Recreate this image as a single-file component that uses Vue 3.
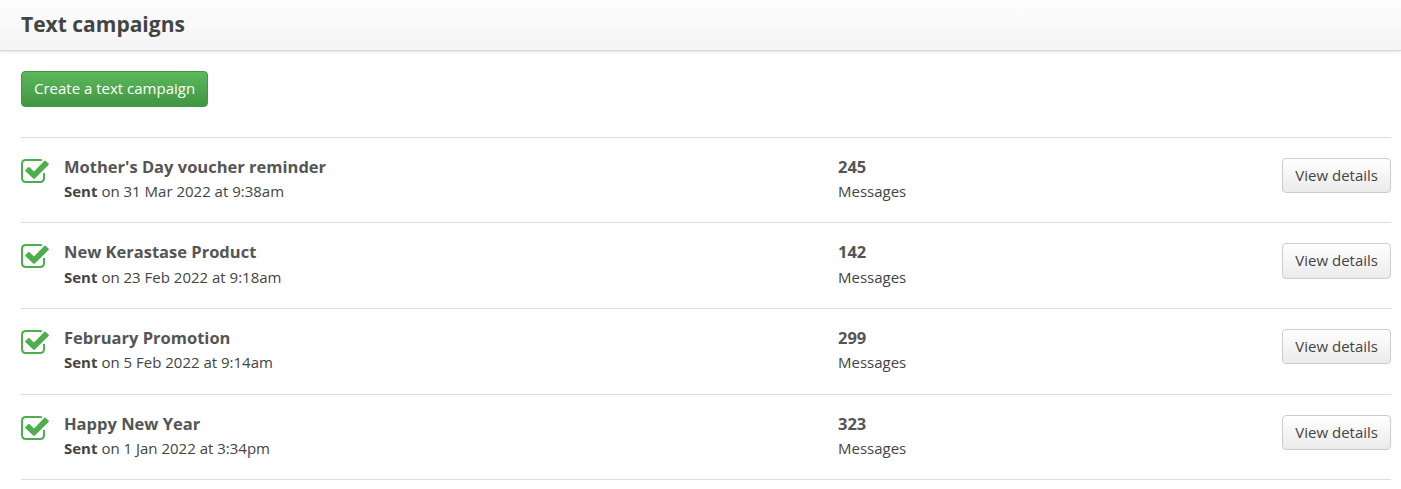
<template>
  <div class="page">
    <header class="page-header">
      <h1>Text campaigns</h1>
    </header>

    <main class="content">
      <button class="btn btn-success">Create a text campaign</button>

      <ul class="campaigns">
        <li v-for="campaign in campaigns" :key="campaign.name" class="campaign">
          <svg class="icon" viewBox="0 0 28 26" width="28" height="26">
            <path
              class="box"
              d="M21 2.4Q20.3 2 19 2H5Q1 2 1 6V20Q1 24 5 24H19Q23 24 23 20V15"
            />
            <path
              class="tick"
              d="M4.5 11.9L7.1 9.3Q7.9 8.6 8.6 9.3L13 13.5L23.2 3Q24 2.2 24.8 3L27.5 5.5Q28.3 6.3 27.5 7.1L13.8 20.5Q13 21.2 12.2 20.5L4.5 13.3Q3.8 12.6 4.5 11.9Z"
            />
          </svg>
          <div class="info">
            <h2>{{ campaign.name }}</h2>
            <p><strong>Sent</strong> on {{ campaign.sentAt }}</p>
          </div>
          <div class="count">
            <h2>{{ campaign.messages }}</h2>
            <p>Messages</p>
          </div>
          <button class="btn btn-default">View details</button>
        </li>
      </ul>
    </main>
  </div>
</template>

<script setup>
const campaigns = [
  { name: "Mother's Day voucher reminder", sentAt: '31 Mar 2022 at 9:38am', messages: 245 },
  { name: 'New Kerastase Product', sentAt: '23 Feb 2022 at 9:18am', messages: 142 },
  { name: 'February Promotion', sentAt: '5 Feb 2022 at 9:14am', messages: 299 },
  { name: 'Happy New Year', sentAt: '1 Jan 2022 at 3:34pm', messages: 323 }
]
</script>

<style>
body {
  margin: 0;
  background: #fff;
}
</style>

<style scoped>
.page {
  height: 489px;
  overflow: hidden;
  font-family: 'Open Sans', sans-serif;
  font-size: 15px;
  color: #444;
}

.page-header {
  box-sizing: border-box;
  height: 51px;
  padding: 0 21px;
  background: linear-gradient(to bottom, #fdfdfd, #f4f4f4);
  border-bottom: 1px solid #d9d9d9;
  box-shadow: 0 1px 3px rgba(0, 0, 0, 0.12);
}

h1 {
  margin: 0;
  font-size: 21px;
  font-weight: 700;
  line-height: 48px;
}

.content {
  padding: 20px 10px 0 21px;
}

.btn {
  display: block;
  box-sizing: border-box;
  padding: 0 12px 2px;
  border: 1px solid;
  border-radius: 4px;
  font-family: inherit;
  font-size: 15px;
  cursor: pointer;
}

.btn-success {
  height: 36px;
  color: #fff;
  background: linear-gradient(to bottom, #5cb85c, #419641);
  border-color: #419641;
}

.btn-default {
  height: 35.4px;
  padding-bottom: 1.2px;
  color: #444;
  background: linear-gradient(to bottom, #fff, #ebebeb);
  border-color: #ccc;
}

.campaigns {
  margin: 29.8px 0 0;
  padding: 0;
  list-style: none;
  border-bottom: 1px solid #ddd;
}

.campaign {
  display: flex;
  align-items: flex-start;
  box-sizing: border-box;
  height: 85.6px;
  padding-top: 20px;
  border-top: 1px solid #ddd;
}

.icon {
  flex: none;
  margin-right: 15px;
}

.box {
  fill: none;
  stroke: #4cae4c;
  stroke-width: 2;
}

.tick {
  fill: #4cae4c;
}

.info {
  width: 774px;
}

.count {
  flex: 1;
}

h2 {
  margin: -3px 0 0;
  font-size: 16.5px;
  font-weight: 700;
  line-height: 24px;
  color: #555;
}

p {
  margin: 0.25px 0 0;
  line-height: 24.4px;
}
</style>
